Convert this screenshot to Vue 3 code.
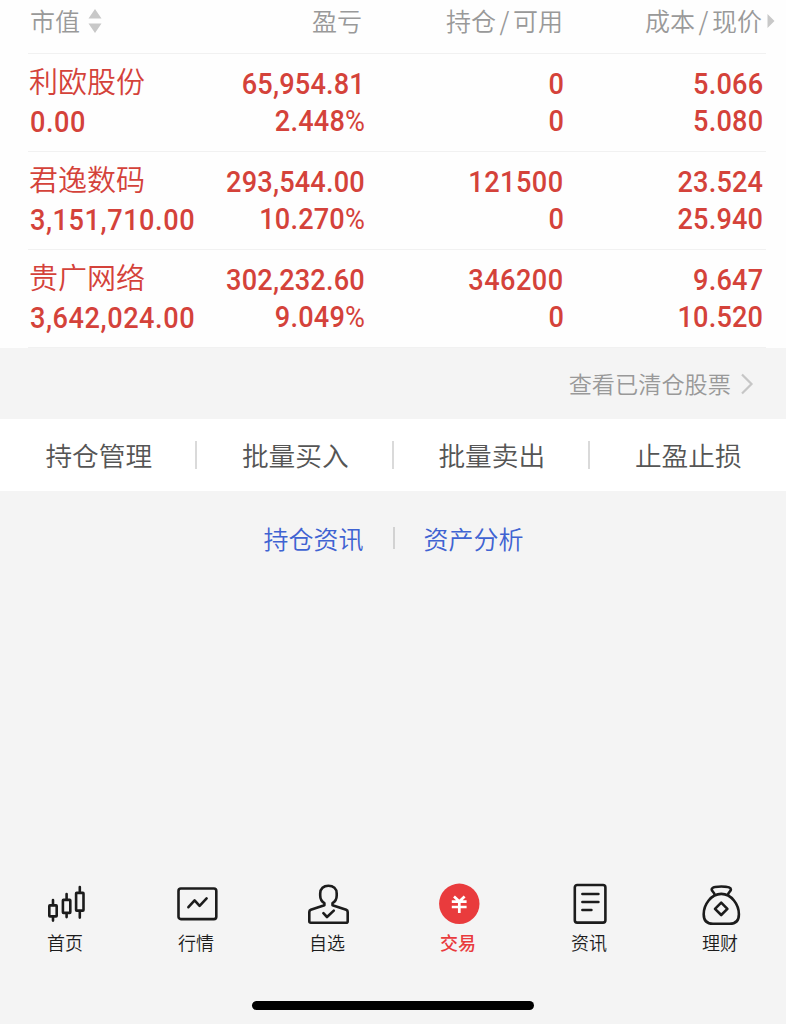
<template>
  <div class="page">
    <section class="holdings">
      <div class="row header">
        <div class="cell left">
          <span>市值</span>
          <svg class="sort-icon" width="14" height="24" viewBox="0 0 14 24">
            <path d="M7 0L13.5 9.5H0.5zM7 24L13.5 14.5H0.5z" fill="#c8c8c8" />
          </svg>
        </div>
        <div class="cell profit">盈亏</div>
        <div class="cell">持仓<span class="slash">/</span>可用</div>
        <div class="cell">
          成本<span class="slash">/</span>现价
          <svg class="more-icon" width="8" height="14" viewBox="0 0 8 14">
            <path d="M0.5 0L7.5 7L0.5 14z" fill="#c8c8c8" />
          </svg>
        </div>
      </div>

      <div v-for="stock in stocks" :key="stock.name" class="row stock">
        <div class="cell left">
          <span class="name">{{ stock.name }}</span>
          <span class="num">{{ stock.value }}</span>
        </div>
        <div class="cell">
          <span class="num">{{ stock.profit }}</span>
          <span class="num">{{ stock.rate }}<span class="percent">%</span></span>
        </div>
        <div class="cell amount">
          <span class="num">{{ stock.amount }}</span>
          <span class="num">{{ stock.available }}</span>
        </div>
        <div class="cell">
          <span class="num">{{ stock.cost }}</span>
          <span class="num">{{ stock.price }}</span>
        </div>
      </div>
    </section>

    <a class="cleared">
      <span>查看已清仓股票</span>
      <svg width="14" height="22" viewBox="0 0 14 22">
        <path d="M2 1.5L11.5 11L2 20.5" fill="none" stroke="#c6c6c6" stroke-width="2.2" />
      </svg>
    </a>

    <div class="actions">
      <a v-for="action in actions" :key="action" class="action">{{ action }}</a>
    </div>

    <div class="links">
      <a>持仓资讯</a>
      <span class="divider"></span>
      <a>资产分析</a>
    </div>

    <nav class="tabbar">
      <a v-for="tab in tabs" :key="tab.id" :class="['tab', { active: tab.id === current }]">
        <svg class="tab-icon" viewBox="0 0 44 44">
          <g v-if="tab.id === 'home'">
            <rect x="5.3" y="23.4" width="7.4" height="11" rx="0.6" />
            <path d="M9 18v5M9 35v3.6" />
            <rect x="18.9" y="17.9" width="7.4" height="13" rx="0.6" />
            <path d="M22.6 12v5.5M22.6 31.5v3.6" />
            <rect x="32.1" y="10.9" width="7.4" height="17.7" rx="0.6" />
            <path d="M35.8 5v5.5M35.8 29v6.6" />
          </g>
          <g v-else-if="tab.id === 'market'">
            <rect x="3.5" y="6.5" width="37.8" height="30.6" rx="2.4" />
            <path d="M13.4 25.2L19.6 18.4L24.6 23.8L31.6 16.4" />
          </g>
          <g v-else-if="tab.id === 'favorite'">
            <path
              d="M18.4 21.2C15.6 19.6 14.2 16.6 14.2 13.6V11.6C14.2 6.6 17.6 3.8 22.4 3.8S30.7 6.6 30.7 11.6V13.6C30.7 16.6 29.3 19.6 26.5 21.2V23.2L40.2 27.8Q41.7 28.4 41.7 30V39.2Q41.7 40.7 40.2 40.7H4.8Q3.3 40.7 3.3 39.2V30Q3.3 28.4 4.8 27.8L18.4 23.2Z"
            />
            <path d="M17.4 31.2L21 35L27.8 28.6" />
          </g>
          <g v-else-if="tab.id === 'trade'">
            <circle cx="22.3" cy="21.8" r="20.2" class="disc" />
            <path d="M17 14.6L22.3 19.6L27.6 14.6M14.8 19.6H29.6M14.8 25H29.6M22.3 19V31" class="yen" />
          </g>
          <g v-else-if="tab.id === 'news'">
            <rect x="6.8" y="3" width="30.6" height="37.6" rx="2.4" />
            <path d="M14.4 12H30.4M14.4 20H30.4M14.4 28H23.4" />
          </g>
          <g v-else>
            <path
              d="M15.6 12.6C15.2 10.4 12.7 9 12.7 7.4C12.7 4.7 19 4.5 22.3 4.5S31.9 4.7 31.9 7.4C31.9 9 29.4 10.4 29 12.6"
            />
            <path
              d="M22.3 11.9C12 11.9 4.7 22.8 4.7 32.2C4.7 38.8 8.6 41.8 14 41.8H30.6C36 41.8 39.9 38.8 39.9 32.2C39.9 22.8 32.6 11.9 22.3 11.9Z"
            />
            <path d="M22.2 20.6L28.4 26.8L22.2 33L16 26.8Z" />
          </g>
        </svg>
        <span class="tab-label">{{ tab.label }}</span>
      </a>
    </nav>

    <div class="home-indicator"></div>
  </div>
</template>

<script setup>
import { ref } from 'vue';

const stocks = ref([
  {
    name: '利欧股份',
    value: '0.00',
    profit: '65,954.81',
    rate: '2.448',
    amount: '0',
    available: '0',
    cost: '5.066',
    price: '5.080',
  },
  {
    name: '君逸数码',
    value: '3,151,710.00',
    profit: '293,544.00',
    rate: '10.270',
    amount: '121500',
    available: '0',
    cost: '23.524',
    price: '25.940',
  },
  {
    name: '贵广网络',
    value: '3,642,024.00',
    profit: '302,232.60',
    rate: '9.049',
    amount: '346200',
    available: '0',
    cost: '9.647',
    price: '10.520',
  },
]);

const actions = ['持仓管理', '批量买入', '批量卖出', '止盈止损'];

const tabs = [
  { id: 'home', label: '首页' },
  { id: 'market', label: '行情' },
  { id: 'favorite', label: '自选' },
  { id: 'trade', label: '交易' },
  { id: 'news', label: '资讯' },
  { id: 'wealth', label: '理财' },
];
const current = ref('trade');
</script>

<style>
body {
  margin: 0;
  background-color: #f4f4f4;
}
</style>

<style scoped>
* {
  box-sizing: border-box;
}

.page {
  display: flex;
  flex-direction: column;
  width: 100%;
  height: 1024px;
  overflow: hidden;
  background-color: #f4f4f4;
  font-family: 'Noto Sans CJK SC', sans-serif;
  font-weight: 350;
}

.holdings {
  height: 348px;
  padding: 0 20px 0 28px;
  background-color: #fefefe;
}

.row {
  display: grid;
  grid-template-columns: 167px 171px 199px 199px;
  height: 98px;
  padding-left: 2px;
  border-bottom: 1px solid #f1f1f1;
}

.cell {
  display: flex;
  flex-direction: column;
  align-items: flex-end;
  white-space: nowrap;
}

.cell.left {
  align-items: flex-start;
}

.header {
  height: 54px;
  color: #999;
  font-size: 25px;
  line-height: 40px;
}

.header .cell {
  position: relative;
  flex-direction: row;
  align-items: flex-start;
  justify-content: flex-end;
  padding-right: 4px;
}

.header .cell.profit {
  padding-right: 6px;
}

.header .cell.left {
  justify-content: flex-start;
  padding-right: 0;
}

.slash {
  width: 17px;
  text-align: center;
}

.sort-icon {
  margin: 9px 0 0 8px;
}

.more-icon {
  position: absolute;
  top: 14px;
  right: -9px;
}

.stock {
  color: #d4423a;
}

.stock .cell {
  padding: 12px 3px 0 0;
}

.stock .cell.left {
  padding-top: 7px;
}

.name {
  height: 43px;
  margin-left: -1px;
  font-size: 29px;
  line-height: 39px;
}

.num {
  height: 37px;
  font-family: Roboto, sans-serif;
  font-size: 29.5px;
  font-weight: 500;
  line-height: 37px;
  letter-spacing: 0.2px;
  transform: scaleX(0.92);
  transform-origin: right;
}

.amount .num {
  letter-spacing: 0.5px;
}

.left .num {
  letter-spacing: 0.6px;
  transform-origin: left;
}

.percent {
  font-weight: 400;
}

.cleared {
  display: flex;
  align-items: center;
  justify-content: flex-end;
  gap: 9px;
  height: 71px;
  padding-right: 32px;
  color: #999;
  font-size: 23.2px;
}

.cleared span {
  padding-bottom: 2px;
}

.actions {
  display: flex;
  height: 72px;
  background-color: #fff;
}

.action {
  display: flex;
  position: relative;
  flex: 1;
  align-items: center;
  justify-content: center;
  padding: 0 0 1px 1px;
  color: #555;
  font-size: 26.7px;
}

.action + .action::before {
  position: absolute;
  top: 22px;
  left: -1.5px;
  width: 2px;
  height: 28px;
  background-color: #dadada;
  content: '';
}

.links {
  display: flex;
  align-items: center;
  justify-content: center;
  gap: 29px;
  height: 94px;
  padding-left: 1px;
  color: #3f63d2;
  font-size: 25px;
}

.links a {
  padding-bottom: 1px;
}

.divider {
  width: 2px;
  height: 22px;
  background-color: #d2d2d2;
}

.tabbar {
  display: flex;
  margin-top: auto;
}

.tab {
  display: flex;
  flex: 1;
  flex-direction: column;
  align-items: center;
  padding-right: 1px;
  color: #1c1c1c;
}

.tab-icon {
  width: 44px;
  height: 44px;
  margin-left: 1px;
  fill: none;
  stroke: currentColor;
  stroke-width: 2.6;
  stroke-linecap: round;
  stroke-linejoin: round;
}

.tab-label {
  margin-top: 4px;
  font-size: 18px;
  line-height: 24px;
}

.tab.active {
  color: #e93b3d;
}

.tab.active .tab-label {
  font-weight: 500;
}

.disc {
  fill: #e93b3d;
  stroke: none;
}

.yen {
  stroke: #fff;
  stroke-width: 2.7;
  stroke-linecap: butt;
}

.home-indicator {
  width: 282px;
  height: 9px;
  margin: 47px auto 14px;
  border-radius: 5px;
  background-color: #000;
}
</style>
